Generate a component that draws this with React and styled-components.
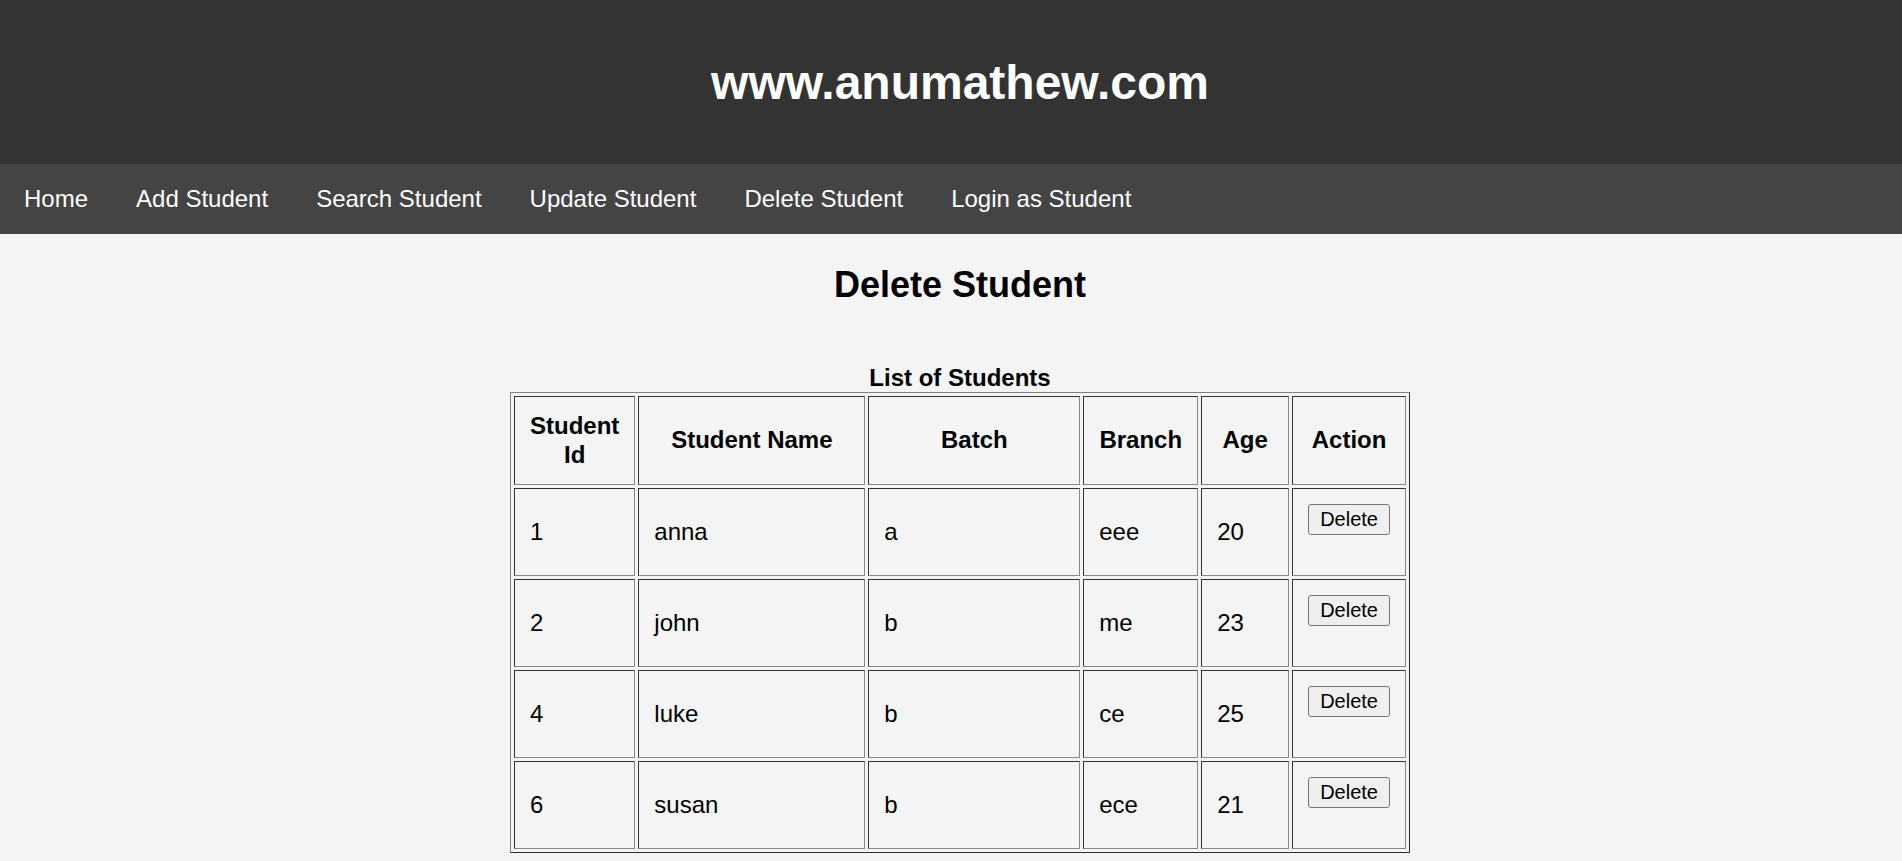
import React from "react";
import styled, { createGlobalStyle } from "styled-components";

const GlobalStyle = createGlobalStyle`
	html, body {
		margin: 0;
		padding: 0;
		background: #f4f4f4;
	}
	body {
		font-family: "Liberation Sans", Arial, sans-serif;
		font-size: 24px;
		color: #000;
	}
`;

const Header = styled.header`
	background: #333;
	height: 164px;
	display: flex;
	align-items: center;
	justify-content: center;
	padding-left: 18px;

	h1 {
		margin: 0;
		color: #fff;
		font-size: 48px;
		font-weight: bold;
		line-height: 55px;
	}
`;

const Nav = styled.nav`
	background: #444;
	display: flex;
	height: 70px;
	align-items: center;
`;

const NavLink = styled.a`
	color: #fff;
	text-decoration: none;
	font-size: 24px;
	padding: 21px 24px;
	line-height: 28px;
`;

const Main = styled.main`
	display: flex;
	flex-direction: column;
	align-items: center;
	padding-left: 18px;

	h2 {
		font-size: 36px;
		line-height: 41px;
		margin: 30px 0 59px;
	}
`;

const Table = styled.table`
	width: 900px;
	border-collapse: separate;
	border-spacing: 3px;
	border: 1px solid;
	border-color: #808080 #2f2f2f #2f2f2f #808080;

	caption {
		font-weight: bold;
		font-size: 24px;
		line-height: 28px;
	}
`;

const Cell = styled.td`
	box-sizing: border-box;
	padding: 15px;
	border: 1px solid;
	border-color: #333 #888 #888 #333;
	text-align: ${(p) => (p.$head ? "center" : "left")};
	font-weight: ${(p) => (p.$head ? "bold" : "normal")};
	vertical-align: middle;
	line-height: 28.5px;
	width: ${(p) => p.$w}px;
`;

const ActionForm = styled.form`
	margin: 0 0 25px;
`;

const Button = styled.button`
	display: block;
	font-family: "Liberation Sans", Arial, sans-serif;
	font-size: 20px;
	height: 31px;
	padding: 0 11px;
	background: #efefef;
	border: 1px solid #767676;
	border-radius: 3px;
	color: #000;
	cursor: pointer;
`;

const columns = [
	{ label: "Student Id", w: 120 },
	{ label: "Student Name", w: 228 },
	{ label: "Batch", w: 213 },
	{ label: "Branch", w: 115 },
	{ label: "Age", w: 88 },
	{ label: "Action", w: 113 },
];

const students = [
	{ id: 1, name: "anna", batch: "a", branch: "eee", age: 20 },
	{ id: 2, name: "john", batch: "b", branch: "me", age: 23 },
	{ id: 4, name: "luke", batch: "b", branch: "ce", age: 25 },
	{ id: 6, name: "susan", batch: "b", branch: "ece", age: 21 },
];

const links = [
	"Home",
	"Add Student",
	"Search Student",
	"Update Student",
	"Delete Student",
	"Login as Student",
];

const App = () => (
	<>
		<GlobalStyle />
		<Header>
			<h1>www.anumathew.com</h1>
		</Header>
		<Nav>
			{links.map((l) => (
				<NavLink key={l} href="#">
					{l}
				</NavLink>
			))}
		</Nav>
		<Main>
			<h2>Delete Student</h2>
			<Table>
				<caption>List of Students</caption>
				<thead>
					<tr>
						{columns.map((c) => (
							<Cell as="th" key={c.label} $head $w={c.w}>
								{c.label}
							</Cell>
						))}
					</tr>
				</thead>
				<tbody>
					{students.map((s) => (
						<tr key={s.id}>
							<Cell>{s.id}</Cell>
							<Cell>{s.name}</Cell>
							<Cell>{s.batch}</Cell>
							<Cell>{s.branch}</Cell>
							<Cell>{s.age}</Cell>
							<Cell>
								<ActionForm onSubmit={(e) => e.preventDefault()}>
									<Button type="submit">Delete</Button>
								</ActionForm>
							</Cell>
						</tr>
					))}
				</tbody>
			</Table>
		</Main>
	</>
);

export default App;
